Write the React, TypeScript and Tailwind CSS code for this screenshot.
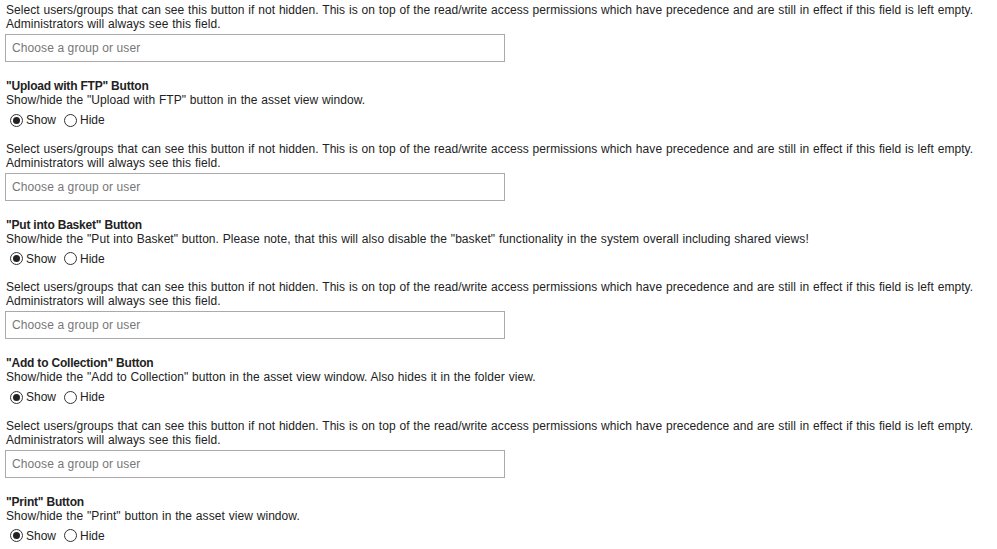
import React, { useState } from 'react';

type Item = {
  title: string;
  desc: string;
};

const items: Item[] = [
  { title: '"Upload with FTP" Button', desc: 'Show/hide the "Upload with FTP" button in the asset view window.' },
  {
    title: '"Put into Basket" Button',
    desc: 'Show/hide the "Put into Basket" button. Please note, that this will also disable the "basket" functionality in the system overall including shared views!',
  },
  { title: '"Add to Collection" Button', desc: 'Show/hide the "Add to Collection" button in the asset view window. Also hides it in the folder view.' },
  { title: '"Print" Button', desc: 'Show/hide the "Print" button in the asset view window.' },
];

const AccessField: React.FC = () => (
  <div>
    <p className="leading-[14px] tracking-[0.06px] [word-spacing:0.4px]">
      Select users/groups that can see this button if not hidden. This is on top of the read/write access permissions which have
      precedence and are still in effect if this field is left empty.
      <br />
      Administrators will always see this field.
    </p>
    <div className="mt-[3px] ml-[-1px] w-[500px] h-[28px] border border-[#aaaaaa] bg-white flex items-center px-[6px] text-[#777] text-[12px] tracking-[0.1px]">
      Choose a group or user
    </div>
  </div>
);

const Radio: React.FC<{ checked: boolean; label: string; onClick: () => void }> = ({ checked, label, onClick }) => (
  <label className="flex items-center cursor-pointer" onClick={onClick}>
    <span className="w-[13px] h-[13px] rounded-full border border-[#333] bg-white flex items-center justify-center mr-[3px]">
      {checked && <span className="w-[7px] h-[7px] rounded-full bg-[#222]" />}
    </span>
    <span>{label}</span>
  </label>
);

const ToggleRow: React.FC<{ item: Item }> = ({ item }) => {
  const [show, setShow] = useState(true);
  return (
    <div className="mt-[17px]">
      <p className="font-bold leading-[14px] tracking-[-0.2px]">{item.title}</p>
      <p className="leading-[14px] tracking-[0.06px] [word-spacing:0.4px]">{item.desc}</p>
      <div className="flex items-center gap-[8px] ml-[4px] mt-[5px] h-[16px]">
        <Radio checked={show} label="Show" onClick={() => setShow(true)} />
        <Radio checked={!show} label="Hide" onClick={() => setShow(false)} />
      </div>
    </div>
  );
};

export default function App() {
  return (
    <div className="bg-white min-h-screen pl-[6px] pt-[3px] text-[12px] text-[#222] font-['Liberation_Sans',Arial,sans-serif] w-[997px] h-[549px] overflow-hidden">
      {items.map((item, i) => (
        <div key={i} className={i === 0 ? '' : 'mt-[13.6px]'}>
          <AccessField />
          <ToggleRow item={item} />
        </div>
      ))}
    </div>
  );
}
